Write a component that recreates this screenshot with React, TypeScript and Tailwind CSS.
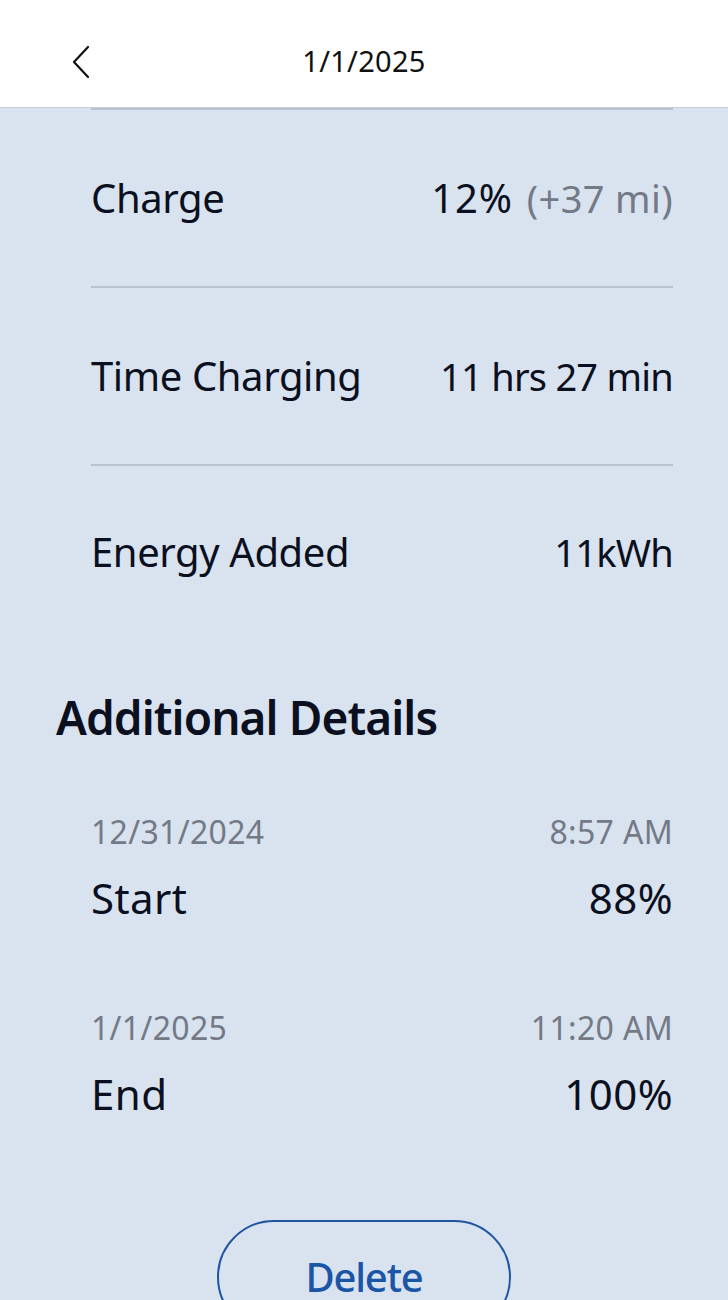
import React from 'react';

const font = { fontFamily: '"Noto Sans", "Open Sans", sans-serif' };

const stats = [
  { label: 'Charge', value: '12%', extra: '(+37 mi)' },
  { label: 'Time Charging', value: '11 hrs 27 min' },
  { label: 'Energy Added', value: '11kWh' },
];

const details = [
  { date: '12/31/2024', time: '8:57 AM', label: 'Start', value: '88%' },
  { date: '1/1/2025', time: '11:20 AM', label: 'End', value: '100%' },
];

export default function App() {
  return (
    <div className="w-full min-h-screen bg-[#d9e2ef] text-[#0b1020]" style={font}>
      {/* header */}
      <header className="relative h-[108px] bg-white border-b border-[#c9ccd1] flex items-center justify-center">
        <button className="absolute left-[66px] top-[40px] p-1">
          <svg width="22" height="36" viewBox="0 0 22 36" fill="none" stroke="#111" strokeWidth="2.2" strokeLinecap="round" strokeLinejoin="round">
            <path d="M18 3 L4 18 L18 33" />
          </svg>
        </button>
        <h1 className="text-[29px] tracking-[0.01em] text-[#111] pt-[14px]">1/1/2025</h1>
      </header>

      <main className="pl-[56px] pr-[55px] pb-10">
        <div className="ml-[35px] border-t-2 border-[#b9c2cf]">
          {stats.map((s, i) => (
            <div
              key={s.label}
              className={`flex items-center justify-between ${i < stats.length - 1 ? 'h-[178px] border-b-2 border-[#b9c2cf]' : 'h-[172px]'}`}
            >
              <span className="text-[40px] tracking-[-0.01em]">{s.label}</span>
              <span className="text-[38px] tracking-[-0.02em]">
                {s.extra ? <span className="text-[40px] tracking-[0.02em]">{s.value}</span> : s.value}
                {s.extra && <span className="text-[#737a86] ml-[14px] tracking-[0.01em]">{s.extra}</span>}
              </span>
            </div>
          ))}
        </div>

        <h2 className="text-[46px] font-semibold tracking-[-0.02em] leading-none mt-[56px] mb-[76px]">Additional Details</h2>

        <div className="ml-[35px] flex flex-col gap-[93px]">
          {details.map((d) => (
            <div key={d.label} className="flex flex-col gap-[29px]">
              <div className="flex justify-between text-[32px] text-[#737a86] leading-none tracking-[0.01em]">
                <span>{d.date}</span>
                <span>{d.time}</span>
              </div>
              <div className="flex justify-between text-[42px] leading-none tracking-[0.01em]">
                <span>{d.label}</span>
                <span>{d.value}</span>
              </div>
            </div>
          ))}
        </div>

        <div className="flex justify-center mt-[105px] -ml-[1px]">
          <button className="w-[294px] h-[114px] rounded-full border-2 border-[#1d55a0] text-[#1a55a6] text-[40px] font-medium tracking-[-0.03em]">
            Delete
          </button>
        </div>
      </main>
    </div>
  );
}
